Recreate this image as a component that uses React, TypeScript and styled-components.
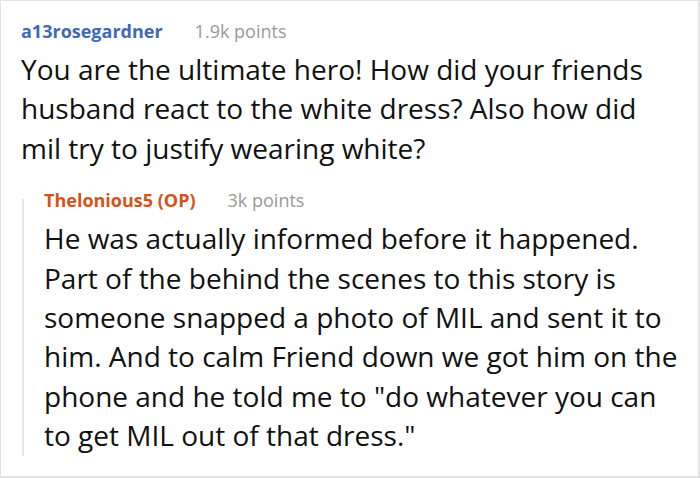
import styled, { createGlobalStyle } from "styled-components";

const GlobalStyle = createGlobalStyle`
  html, body {
    margin: 0;
    padding: 0;
    background: #ffffff;
  }
  body {
    font-family: "Open Sans", "Noto Sans", sans-serif;
  }
`;

const Frame = styled.div`
  box-sizing: border-box;
  width: 700px;
  height: 478px;
  border: 1px solid #e3e3e3;
  border-right-width: 2px;
  border-bottom-width: 2px;
  padding: 17px 0 0 20px;
  overflow: hidden;
`;

const Comment = styled.div<{ $nested?: boolean }>`
  position: relative;
  margin-top: ${(p) => (p.$nested ? "19px" : "0")};
  padding-left: ${(p) => (p.$nested ? "23px" : "0")};

  &::before {
    content: "";
    display: ${(p) => (p.$nested ? "block" : "none")};
    position: absolute;
    left: 1px;
    top: 12px;
    bottom: 0;
    width: 2px;
    background: #e8e8e8;
  }
`;

const Meta = styled.div`
  display: flex;
  align-items: baseline;
  gap: 32px;
  height: 26px;
  line-height: 26px;
  padding-bottom: 6px;
`;

const Author = styled.span<{ $op?: boolean }>`
  font-size: 18px;
  font-weight: 700;
  color: ${(p) => (p.$op ? "#d4531d" : "#3f6ab3")};
`;

const Points = styled.span`
  font-size: 18px;
  color: #9a9a9a;
`;

const Body = styled.p`
  margin: 0;
  font-size: 28px;
  line-height: 39.4px;
  color: #111;
  white-space: nowrap;
`;

export default function App() {
  return (
    <>
      <GlobalStyle />
      <Frame>
        <Comment>
          <Meta>
            <Author>a13rosegardner</Author>
            <Points>1.9k points</Points>
          </Meta>
          <Body>
            You are the ultimate hero! How did your friends
            <br />
            husband react to the white dress? Also how did
            <br />
            mil try to justify wearing white?
          </Body>
        </Comment>
        <Comment $nested>
          <Meta>
            <Author $op>Thelonious5 (OP)</Author>
            <Points>3k points</Points>
          </Meta>
          <Body>
            He was actually informed before it happened.
            <br />
            Part of the behind the scenes to this story is
            <br />
            someone snapped a photo of MIL and sent it to
            <br />
            him. And to calm Friend down we got him on the
            <br />
            phone and he told me to "do whatever you can
            <br />
            to get MIL out of that dress."
          </Body>
        </Comment>
      </Frame>
    </>
  );
}
